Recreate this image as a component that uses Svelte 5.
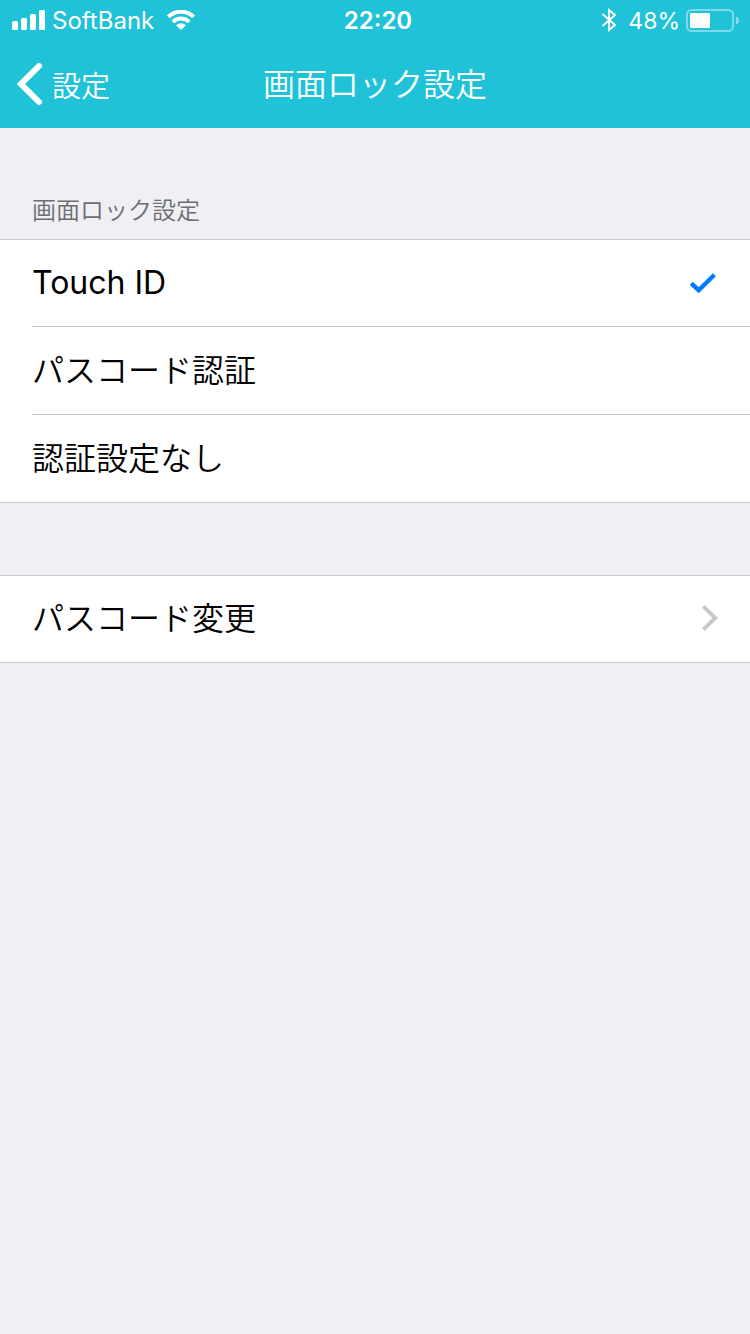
<script>
  const methods = [
    { id: 'touch', label: 'Touch ID', latin: true },
    { id: 'passcode', label: 'パスコード認証' },
    { id: 'none', label: '認証設定なし' },
  ];
  let selected = $state('touch');
</script>

<div class="screen">
  <header>
    <div class="status">
      <div class="carrier">
        <svg width="34" height="20" viewBox="0 0 34 20" fill="#fff" aria-hidden="true">
          <rect x="0" y="11" width="6" height="9" rx="1.5" />
          <rect x="9" y="8" width="6" height="12" rx="1.5" />
          <rect x="18" y="4" width="6" height="16" rx="1.5" />
          <rect x="27" y="0" width="6" height="20" rx="1.5" />
        </svg>
        <span>SoftBank</span>
        <svg class="wifi" width="28" height="20" viewBox="0 0 28 20" aria-hidden="true">
          <g fill="none" stroke="#fff" stroke-width="4">
            <path d="M1.3 6.9 A18 18 0 0 1 26.7 6.9" />
            <path d="M5.8 11.8 A11.6 11.6 0 0 1 22.2 11.8" />
          </g>
          <path d="M9 15.2 A7.2 7.2 0 0 1 19 15.2 L14 20 Z" fill="#fff" />
        </svg>
      </div>
      <time>22:20</time>
      <div class="power">
        <svg class="bluetooth" width="16" height="24" viewBox="0 0 16 24" fill="none" stroke="#fff" stroke-width="1.9" aria-hidden="true">
          <path d="M1.5 6 L14 17 L8 22 V2 L14 7 L1.5 18" />
        </svg>
        <span class="percent">48%</span>
        <svg width="54" height="24" viewBox="0 0 54 24" aria-hidden="true">
          <rect x="1" y="2" width="46" height="21" rx="4.5" fill="none" stroke="#fff" stroke-opacity=".42" stroke-width="2" />
          <rect x="4" y="5" width="20" height="15" rx="1" fill="#fff" />
          <path d="M50 8.5 Q53 9.5 53 12.5 Q53 15.5 50 16.5 Z" fill="#fff" fill-opacity=".45" />
        </svg>
      </div>
    </div>
    <nav>
      <button class="back" type="button">
        <svg width="26" height="44" viewBox="0 0 26 44" fill="none" stroke="#fff" stroke-width="6" stroke-linecap="round" stroke-linejoin="miter" aria-hidden="true">
          <path d="M23 4 L5 22 L23 40" />
        </svg>
        <span>設定</span>
      </button>
      <h1>画面ロック設定</h1>
    </nav>
  </header>

  <main>
    <fieldset>
      <legend>画面ロック設定</legend>
      <div class="group">
        {#each methods as m (m.id)}
          <label class="row">
            <input type="radio" name="lock" value={m.id} bind:group={selected} />
            <span class="line">
              <span class={m.latin ? 'latin' : 'kana'}>{m.label}</span>
              {#if selected === m.id}
                <svg width="28" height="24" viewBox="0 0 28 24" fill="none" stroke="#007aff" stroke-width="4.4" aria-hidden="true">
                  <path d="M1.3 12.4 L8.7 19.2 L24.4 3.8" />
                </svg>
              {/if}
            </span>
          </label>
        {/each}
      </div>
    </fieldset>

    <div class="group">
      <button class="row" type="button">
        <span class="line">
          <span class="kana">パスコード変更</span>
          <svg width="18" height="28" viewBox="0 0 18 28" fill="none" stroke="#c7c7cc" stroke-width="4" aria-hidden="true">
            <path d="M3.4 1.4 L15.2 13 L3.4 24.6" />
          </svg>
        </span>
      </button>
    </div>
  </main>
</div>

<style>
  :global(body) {
    margin: 0;
    background: #efeff4;
  }
  .screen {
    min-height: 100vh;
    background: #efeff4;
    color: #000;
    font-family: Inter, "Noto Sans CJK JP", sans-serif;
    font-size: 32px;
  }
  header {
    background: #20c2d7;
    color: #fff;
  }
  .status {
    display: grid;
    grid-template-columns: 1fr auto 1fr;
    align-items: center;
    height: 40px;
    padding: 0 10px 0 12px;
    font-size: 24px;
    line-height: 38px;
  }
  .status span,
  time {
    padding-top: 2px;
  }
  .carrier,
  .power {
    display: flex;
    align-items: center;
    gap: 6px;
  }
  .wifi {
    margin-left: 7px;
  }
  .bluetooth {
    margin-right: 5px;
  }
  .percent {
    font-size: 23px;
  }
  .power {
    justify-content: flex-end;
  }
  time {
    padding-left: 4px;
    font-weight: 600;
  }
  nav {
    display: grid;
    grid-template-columns: 1fr auto 1fr;
    align-items: center;
    height: 88px;
    padding: 0 16px;
  }
  button {
    border: 0;
    background: none;
    padding: 0;
    color: inherit;
    font: inherit;
    text-align: left;
  }
  .back {
    display: flex;
    align-items: center;
    gap: 10px;
    font-size: 29px;
    font-weight: 350;
  }
  h1 {
    margin: 0;
    padding-bottom: 4px;
    font-size: 32px;
    font-weight: 350;
  }
  fieldset {
    border: 0;
    margin: 0 0 72px;
    padding: 0;
    min-width: 0;
  }
  legend {
    box-sizing: border-box;
    height: 111px;
    padding: 65px 32px 0;
    color: #6d6d72;
    font-size: 24px;
    font-weight: 350;
    line-height: 36px;
  }
  .group {
    border: 1px solid #c8c7cc;
    border-width: 1px 0;
    background: #fff;
  }
  .row {
    display: block;
    width: 100%;
    box-sizing: border-box;
    padding-left: 32px;
    font-weight: 350;
  }
  .row input {
    position: absolute;
    opacity: 0;
    margin: 0;
  }
  .line {
    display: flex;
    align-items: center;
    justify-content: space-between;
    height: 86px;
    padding-right: 32px;
  }
  .row + .row .line {
    height: 87px;
    border-top: 1px solid #c8c7cc;
  }
  .latin {
    padding-bottom: 2px;
    font-weight: 400;
  }
  .kana {
    padding-bottom: 6px;
  }
</style>
